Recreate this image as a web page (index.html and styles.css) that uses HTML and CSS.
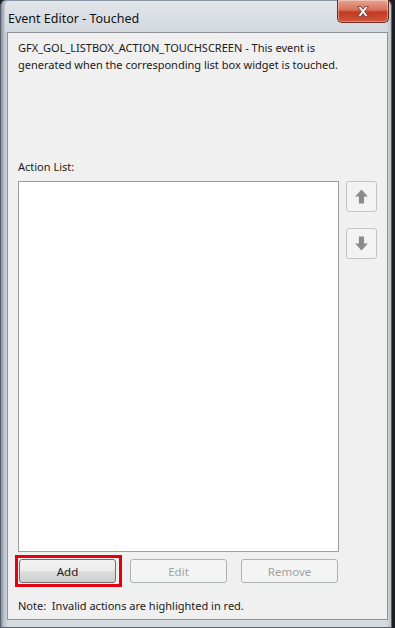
FILE: index.html
```html
<!DOCTYPE html>
<html lang="en">
<head>
  <meta charset="UTF-8" />
  <title>Event Editor - Touched</title>
  <meta name="viewport" content="width=device-width, initial-scale=1.0" />
  <link rel="stylesheet" href="styles.css">
</head>
<body>

  <div class="janela">
    <div class="titulo">
      <span class="titulo-texto">Event Editor - Touched</span>
      <button class="fechar" title="Close">
        <svg viewBox="0 0 16 12"><path d="M3 1.5h3l2 2.6 2-2.6h3l-3.5 4.5 3.5 4.5h-3l-2-2.6-2 2.6h-3l3.5-4.5z"/></svg>
      </button>
    </div>

    <div class="cliente">
      <p class="descricao">GFX_GOL_LISTBOX_ACTION_TOUCHSCREEN - This event is generated when the corresponding list box widget is touched.</p>

      <div class="rotulo">Action List:</div>

      <div class="lista-linha">
        <div class="lista"></div>
        <div class="setas">
          <button class="seta" title="Move up">
            <svg viewBox="0 0 16 16"><path d="M8 1.5 14 8h-3.6v6.5H5.6V8H2z"/></svg>
          </button>
          <button class="seta" title="Move down">
            <svg viewBox="0 0 16 16"><path d="M8 14.5 14 8h-3.6V1.5H5.6V8H2z"/></svg>
          </button>
        </div>
      </div>

      <div class="botoes">
        <span class="destaque"><button class="btn">Add</button></span>
        <button class="btn" disabled>Edit</button>
        <button class="btn" disabled>Remove</button>
      </div>

      <div class="nota">Note:&nbsp; Invalid actions are highlighted in red.</div>
    </div>
  </div>

</body>
</html>
```

FILE: styles.css
```css
body {
  margin: 0;
  padding: 0;
  background: #1c1e24;
  font-family: 'Noto Sans', 'Open Sans', sans-serif;
  font-size: 11px;
  color: #1a1a1a;
}

.janela {
  width: 392px;
  height: 628px;
  box-sizing: border-box;
  display: flex;
  flex-direction: column;
  background: linear-gradient(to right, #7d8fa6 0, #b9c3cf 3px, #d6dbe1 7px, #d6dbe1 385px, #b5b8bc 392px);
  border-radius: 6px 6px 0 0;
  border: 1px solid #5a5f66;
  border-top-color: #8a96a4;
}

.titulo {
  height: 31px;
  display: flex;
  align-items: flex-start;
  justify-content: space-between;
  background: linear-gradient(#e2e6ea, #d3d8de);
  border-radius: 6px 6px 0 0;
  margin: 0 4px 0 4px;
}

.titulo-texto {
  font-size: 12.5px;
  color: #111;
  margin: 9px 0 0 3px;
}

.fechar {
  width: 52px;
  height: 23px;
  margin: -1px -2px 0 0;
  padding: 0;
  border: 1px solid #6b2a22;
  border-top: none;
  border-radius: 0 0 5px 5px;
  background: linear-gradient(#e9a492 0, #d8705b 45%, #c23a22 55%, #d0553b 100%);
  box-shadow: inset 0 0 0 1px rgba(255,255,255,0.35);
  display: flex;
  align-items: center;
  justify-content: center;
}

.fechar svg {
  width: 18px;
  height: 13px;
  fill: #fff;
  stroke: #5a2a24;
  stroke-width: 0.7;
}

.cliente {
  flex: 1;
  margin: 0 3px 7px 6px;
  background: #f0f0f0;
  border: 1px solid #8c9196;
  padding: 6px 10px 0 10px;
  display: flex;
  flex-direction: column;
}

.descricao {
  margin: 0;
  line-height: 17px;
  width: 345px;
}

.rotulo {
  margin-top: 85px;
  line-height: 17px;
}

.lista-linha {
  margin-top: 6px;
  display: flex;
  align-items: flex-start;
}

.lista {
  width: 319px;
  height: 369px;
  background: #fff;
  border: 1px solid #9a9fa6;
}

.setas {
  margin-left: 7px;
  display: flex;
  flex-direction: column;
  gap: 16px;
}

.seta {
  width: 31px;
  height: 31px;
  padding: 0;
  background: #f3f3f3;
  border: 1px solid #c3c3c3;
  border-radius: 3px;
  display: flex;
  align-items: center;
  justify-content: center;
}

.seta svg {
  width: 17px;
  height: 17px;
  fill: #8a8a8a;
}

.botoes {
  margin-top: 3px;
  display: flex;
  align-items: center;
  gap: 14px;
  margin-left: -3px;
}

.destaque {
  border: 3px solid #e4000f;
  padding: 1px 3px 1px 1px;
  display: flex;
  margin-right: -6px;
}

.btn {
  width: 97px;
  height: 24px;
  padding: 0;
  font-family: inherit;
  font-size: 11.5px;
  color: #1a1a1a;
  border: 1px solid #707070;
  border-radius: 3px;
  background: linear-gradient(#f2f2f2 0, #ebebeb 50%, #dddddd 51%, #cfcfcf 100%);
}

.btn:disabled {
  color: #a0a0a0;
  border-color: #adb2b5;
  background: #f4f4f4;
}

.nota {
  margin-top: 10px;
  line-height: 17px;
}
```
